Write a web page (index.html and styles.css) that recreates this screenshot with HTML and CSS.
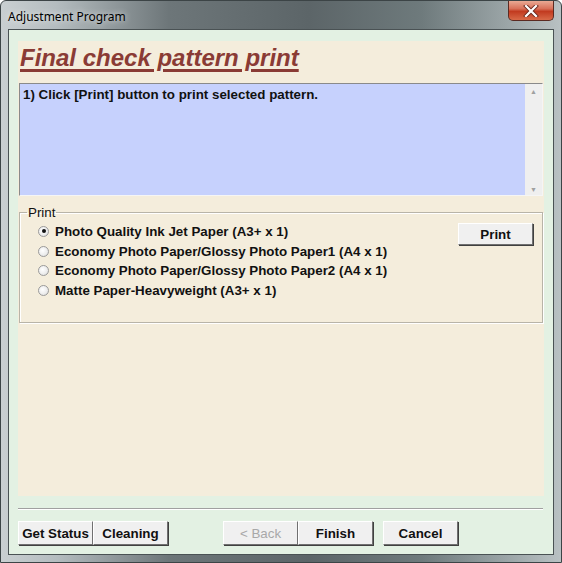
FILE: index.html
```html
<!DOCTYPE html>
<html lang="en">
<head>
  <meta charset="UTF-8" />
  <title>Adjustment Program</title>
  <link rel="stylesheet" href="styles.css">
</head>
<body>

  <div class="window">
    <div class="titlebar">
      <span class="caption">Adjustment Program</span>
      <span class="close-btn">
        <svg width="16" height="12" viewBox="0 0 16 12">
          <path d="M3 1 L13 11 M13 1 L3 11" stroke="#6a2a20" stroke-width="4" stroke-linecap="square"/>
          <path d="M3 1 L13 11 M13 1 L3 11" stroke="#fff" stroke-width="2.2" stroke-linecap="square"/>
        </svg>
      </span>
    </div>

    <div class="client">
      <div class="panel">
        <h1 class="heading">Final check pattern print</h1>

        <div class="textbox">
          <p>1) Click [Print] button to print selected pattern.</p>
          <div class="scrollbar">
            <span class="arrow up">&#9650;</span>
            <span class="arrow down">&#9660;</span>
          </div>
        </div>

        <fieldset class="group">
          <legend>Print</legend>
          <div class="options">
            <label class="option"><span class="radio checked"></span>Photo Quality Ink Jet Paper (A3+ x 1)</label>
            <label class="option"><span class="radio"></span>Economy Photo Paper/Glossy Photo Paper1 (A4 x 1)</label>
            <label class="option"><span class="radio"></span>Economy Photo Paper/Glossy Photo Paper2 (A4 x 1)</label>
            <label class="option"><span class="radio"></span>Matte Paper-Heavyweight (A3+ x 1)</label>
          </div>
          <button class="btn print-btn">Print</button>
        </fieldset>
      </div>

      <hr class="separator">

      <div class="buttons">
        <button class="btn">Get Status</button>
        <button class="btn">Cleaning</button>
        <button class="btn disabled">&lt; Back</button>
        <button class="btn">Finish</button>
        <button class="btn cancel">Cancel</button>
      </div>
    </div>
  </div>

</body>
</html>
```

FILE: styles.css
```css
* {
  box-sizing: border-box;
}

body {
  margin: 0;
  background: #ffffff;
  font-family: "Liberation Sans", Arial, sans-serif;
}

.window {
  width: 562px;
  height: 563px;
  display: flex;
  flex-direction: column;
  border: 1px solid #3c4446;
  border-radius: 6px 6px 0 0;
  background: linear-gradient(90deg, #c9cfd1 0%, #b4bcbf 10%, #6d7679 30%, #5c6568 55%, #6e7a7c 75%, #9aa4a6 90%, #b9c1c3 100%);
}

.titlebar {
  height: 28px;
  display: flex;
  align-items: flex-start;
  justify-content: space-between;
  padding-left: 7px;
}

.caption {
  margin-top: 7px;
  font-family: "Noto Sans", "Open Sans", sans-serif;
  font-size: 12px;
  color: #000;
  text-shadow: 0 0 6px rgba(255, 255, 255, 0.9);
}

.close-btn {
  width: 46px;
  height: 20px;
  margin-right: 7px;
  display: flex;
  align-items: center;
  justify-content: center;
  border: 1px solid #5b2a22;
  border-top: none;
  border-radius: 0 0 5px 5px;
  background: linear-gradient(180deg, #e9a994 0%, #d8715a 40%, #c23b20 55%, #d86a48 100%);
}

.client {
  flex: 1;
  margin: 0 7px 7px 7px;
  border: 1px solid #4a5254;
  background: #e3f1e3;
  display: flex;
  flex-direction: column;
  padding: 11px 9px 0 9px;
}

.panel {
  height: 455px;
  background: #f4eddc;
  padding: 1px 1px 0 1px;
}

.heading {
  margin: 2px 0 0 1px;
  font-size: 24px;
  font-style: italic;
  font-weight: bold;
  color: #8a3b35;
  text-decoration: underline;
  text-decoration-thickness: 3px;
  text-underline-offset: 3px;
  line-height: 28px;
}

.textbox {
  margin-top: 11px;
  height: 113px;
  display: flex;
  background: #c6d1fd;
  border: 1px solid;
  border-color: #8a8a8a #f5f5f5 #f5f5f5 #8a8a8a;
}

.textbox p {
  flex: 1;
  margin: 3px 0 0 3px;
  font-size: 13.35px;
  font-weight: bold;
  color: #111;
}

.scrollbar {
  width: 17px;
  background: #efefef;
  display: flex;
  flex-direction: column;
  justify-content: space-between;
  align-items: center;
  padding: 4px 0 2px 0;
}

.arrow {
  font-size: 7px;
  color: #a0a0a0;
}

.group {
  margin: 9px 0 0 0;
  height: 118px;
  border: 1px solid #b8b4a8;
  box-shadow: inset 1px 1px 0 #ffffff, 1px 1px 0 #ffffff;
  padding: 1px 9px 0 18px;
  display: flex;
  justify-content: space-between;
  align-items: flex-start;
}

.group legend {
  padding: 0 1px;
  margin-left: -11px;
  font-size: 13.35px;
  color: #111;
}

.options {
  margin-top: 2px;
  display: flex;
  flex-direction: column;
  gap: 3.3px;
}

.option {
  display: flex;
  align-items: center;
  font-size: 13.35px;
  font-weight: bold;
  color: #111;
  height: 16.5px;
}

.radio {
  width: 11px;
  height: 11px;
  border-radius: 50%;
  margin-right: 6px;
  border: 1px solid #9a9a9a;
  background: radial-gradient(circle at 40% 40%, #ffffff 0%, #ececec 60%, #d0d0d0 100%);
  display: flex;
  align-items: center;
  justify-content: center;
}

.radio.checked::after {
  content: "";
  width: 4px;
  height: 4px;
  border-radius: 50%;
  background: #111;
}

.btn {
  width: 75px;
  height: 24px;
  padding: 0;
  font-family: "Liberation Sans", Arial, sans-serif;
  font-size: 13.35px;
  font-weight: bold;
  color: #111;
  background: #f0f0f0;
  border: 1px solid;
  border-color: #ffffff #707070 #707070 #ffffff;
  box-shadow: 1px 1px 0 #404040;
}

.print-btn {
  margin-top: 2px;
  height: 22px;
}

.separator {
  margin: 12px 1px 0 0;
  border: none;
  border-top: 1px solid #a0a0a0;
  border-bottom: 1px solid #ffffff;
}

.buttons {
  margin-top: 11px;
  display: flex;
}

.btn.disabled {
  margin-left: 55px;
  color: #a8a8a8;
  font-weight: normal;
}

.btn.cancel {
  margin-left: 10px;
}
```
